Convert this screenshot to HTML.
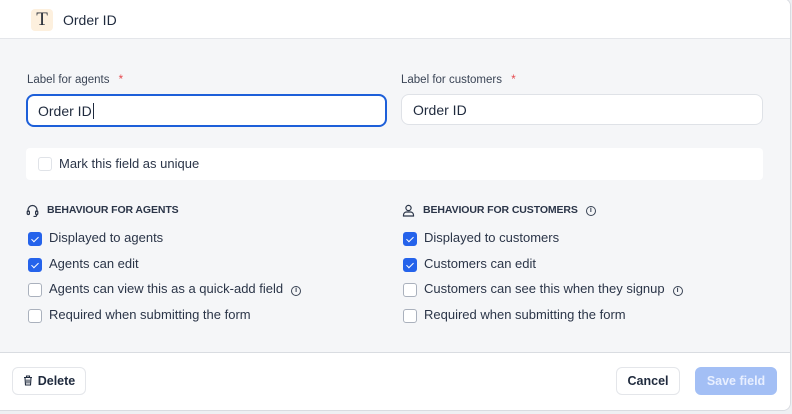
<!DOCTYPE html>
<html><head><style>
*{box-sizing:border-box;margin:0;padding:0}
body{width:792px;height:414px;background:#eef0f3;font-family:"Liberation Sans",sans-serif;color:#1f2a3d;position:relative;overflow:hidden}
.card{position:absolute;left:0;top:-2px;width:791px;height:413px;background:#f5f6f8;border:1px solid #d9dce1;border-left:none;border-radius:0 8px 8px 0;overflow:hidden}
.hdr{position:absolute;left:0;top:0;width:100%;height:40px;background:#fff;border-bottom:1px solid #e4e6ea}
.ticon{position:absolute;left:31px;top:10px;width:22px;height:22px;background:#fdf0de;border-radius:4px;font-family:"Liberation Serif",serif;font-size:19px;text-align:center;line-height:22px;color:#2a2f3a}
.title{position:absolute;left:63px;top:13px;font-size:14px}
.lbl{position:absolute;top:75px;font-size:11.5px;color:#3b4556}
.lbl b{color:#e5484d;font-weight:normal;margin-left:6px}
.inp{position:absolute;top:95px;height:31px;background:#fff;border:1px solid #dfe2e7;border-radius:8px;font-size:14px;padding:7px 11px}
.uniq{position:absolute;left:26px;top:149px;width:737px;height:32px;background:#fff;border-radius:4px}
.cb{position:absolute;width:14px;height:14px;border:1px solid #aab1bd;border-radius:3px;background:#fff}
.cb.on{background:#2563eb;border-color:#2563eb}
.cb.on::after{content:"";position:absolute;left:4px;top:1.5px;width:3px;height:6px;border:solid #fff;border-width:0 1.5px 1.5px 0;transform:rotate(45deg)}
.t{position:absolute;font-size:13px;color:#2b3548}
.h{position:absolute;font-size:10.5px;font-weight:bold;color:#2b3548;letter-spacing:-.1px}
.foot{position:absolute;left:0;top:353px;width:100%;height:60px;background:#fff;border-top:1px solid #d9dce1}
.btn{position:absolute;top:14px;height:28px;border:1px solid #e4e6ea;border-radius:6px;font-size:12.5px;font-weight:bold;background:#fff;line-height:26px;text-align:center}
.info{display:inline-block;width:10px;height:10px;border:1.2px solid #3b4556;border-radius:50%;font-size:7px;line-height:8px;text-align:center;font-weight:bold;vertical-align:1px;margin-left:8px}
</style></head><body>
<div class="card">
<div class="hdr"><div class="ticon">T</div><div class="title">Order ID</div></div>
<div class="lbl" style="left:27px">Label for agents <b>*</b></div>
<div class="lbl" style="left:401px">Label for customers <b>*</b></div>
<div class="inp" style="left:26px;width:361px;height:33px;border:2px solid #1d5fd9;padding:7px 10px">Order ID<span style="border-left:1px solid #1f2a3d;margin-left:1px"></span></div>
<div class="inp" style="left:401px;width:362px">Order ID</div>
<div class="uniq"><div class="cb" style="left:12px;top:9px;border-color:#e0e3e8"></div><div class="t" style="left:33px;top:8px">Mark this field as unique</div></div>

<svg style="position:absolute;left:26px;top:205px" width="13" height="13" viewBox="0 0 13 13" fill="none" stroke="#2b3548" stroke-width="1.2"><path d="M2 8V6a4.5 4.5 0 0 1 9 0v2"/><rect x="1.2" y="7" width="2.2" height="3.5" rx="1"/><rect x="9.6" y="7" width="2.2" height="3.5" rx="1"/><path d="M10.7 10.5v.5a1.5 1.5 0 0 1-1.5 1.5H7.5"/></svg>
<div class="h" style="left:47px;top:205px">BEHAVIOUR FOR AGENTS</div>
<svg style="position:absolute;left:402px;top:205px" width="13" height="13" viewBox="0 0 13 13" fill="none" stroke="#2b3548" stroke-width="1.2"><circle cx="6.5" cy="4" r="2.6"/><path d="M1.5 12v-1a3 3 0 0 1 3-3h4a3 3 0 0 1 3 3v1z"/></svg>
<div class="h" style="left:423px;top:205px">BEHAVIOUR FOR CUSTOMERS<span class="info">i</span></div>

<div class="cb on" style="left:28px;top:233px"></div><div class="t" style="left:49px;top:231px">Displayed to agents</div>
<div class="cb on" style="left:28px;top:259px"></div><div class="t" style="left:49px;top:257px">Agents can edit</div>
<div class="cb" style="left:28px;top:284px"></div><div class="t" style="left:49px;top:282px">Agents can view this as a quick-add field<span class="info">i</span></div>
<div class="cb" style="left:28px;top:310px"></div><div class="t" style="left:49px;top:308px">Required when submitting the form</div>

<div class="cb on" style="left:403px;top:233px"></div><div class="t" style="left:424px;top:231px">Displayed to customers</div>
<div class="cb on" style="left:403px;top:259px"></div><div class="t" style="left:424px;top:257px">Customers can edit</div>
<div class="cb" style="left:403px;top:284px"></div><div class="t" style="left:424px;top:282px">Customers can see this when they signup<span class="info">i</span></div>
<div class="cb" style="left:403px;top:310px"></div><div class="t" style="left:424px;top:308px">Required when submitting the form</div>

<div class="foot">
<div class="btn" style="left:12px;width:74px"><svg width="10" height="11" viewBox="0 0 10 11" fill="none" stroke="#1f2a3d" stroke-width="1.1" style="vertical-align:-1px;margin-right:5px"><path d="M1 2.5h8M3.5 2.5V1h3v1.5M2 2.5l.5 7.5h5l.5-7.5M4 4.5v4M6 4.5v4"/></svg>Delete</div>
<div class="btn" style="left:616px;width:64px">Cancel</div>
<div class="btn" style="left:695px;width:82px;background:#a3bff5;border-color:#a3bff5;color:#e8efff">Save field</div>
</div>
</div>
</body></html>
